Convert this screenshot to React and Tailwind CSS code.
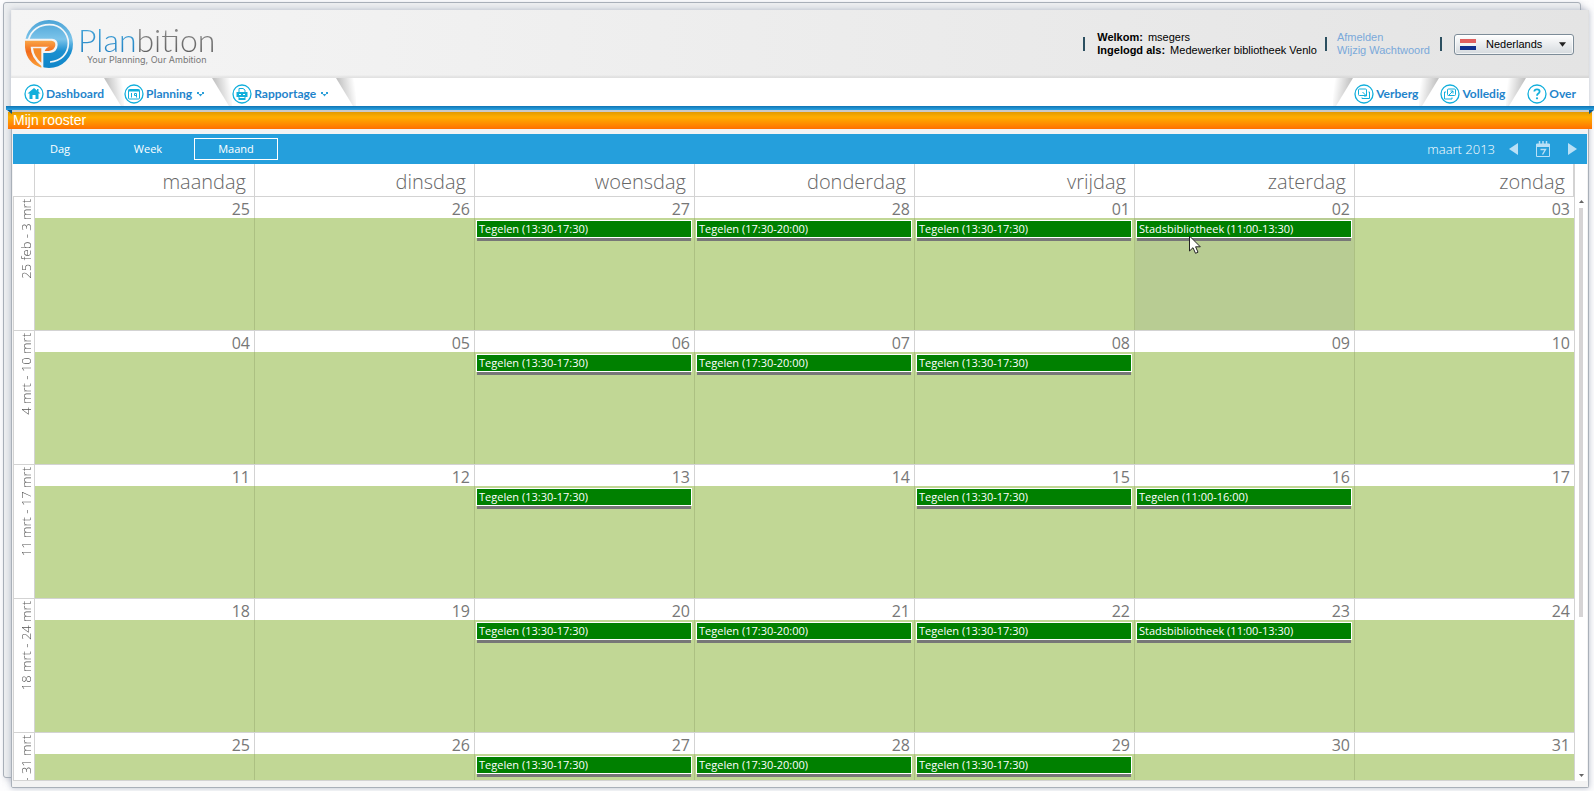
import React from "react";

const DAYS = [
  "maandag",
  "dinsdag",
  "woensdag",
  "donderdag",
  "vrijdag",
  "zaterdag",
  "zondag",
];

const MORNING = "Tegelen (13:30-17:30)";
const EVENING = "Tegelen (17:30-20:00)";
const LIBRARY = "Stadsbibliotheek (11:00-13:30)";

const WEEKS = [
  {
    label: "25 feb - 3 mrt",
    days: ["25", "26", "27", "28", "01", "02", "03"],
    events: { 2: MORNING, 3: EVENING, 4: MORNING, 5: LIBRARY },
    active: 5,
  },
  {
    label: "4 mrt - 10 mrt",
    days: ["04", "05", "06", "07", "08", "09", "10"],
    events: { 2: MORNING, 3: EVENING, 4: MORNING },
  },
  {
    label: "11 mrt - 17 mrt",
    days: ["11", "12", "13", "14", "15", "16", "17"],
    events: { 2: MORNING, 4: MORNING, 5: "Tegelen (11:00-16:00)" },
  },
  {
    label: "18 mrt - 24 mrt",
    days: ["18", "19", "20", "21", "22", "23", "24"],
    events: { 2: MORNING, 3: EVENING, 4: MORNING, 5: LIBRARY },
  },
  {
    label: "25 mrt - 31 mrt",
    days: ["25", "26", "27", "28", "29", "30", "31"],
    events: { 2: MORNING, 3: EVENING, 4: MORNING },
  },
];

function Logo() {
  return (
    <div className="flex items-center gap-1">
      <svg className="size-[50px]" viewBox="14 7 150 150" aria-hidden="true">
        <defs>
          <linearGradient id="logoBlue" x1="0" y1="0" x2="0" y2="1">
            <stop offset="0" stopColor="#4ba3d6" />
            <stop offset="0.4" stopColor="#7cc4ea" />
            <stop offset="0.65" stopColor="#1b8fd0" />
            <stop offset="1" stopColor="#0f86c9" />
          </linearGradient>
          <linearGradient id="logoOrange" x1="0" y1="0" x2="0" y2="1">
            <stop offset="0" stopColor="#f9a648" />
            <stop offset="0.4" stopColor="#f26a1b" />
            <stop offset="1" stopColor="#fba23a" />
          </linearGradient>
        </defs>
        <circle cx="89" cy="82" r="72" fill="url(#logoBlue)" />
        <path
          d="M28 68 C36 40 60 24 90 24 C124 24 147 50 147 80 C147 112 124 134 92 136"
          fill="none"
          stroke="#f3f6f8"
          strokeWidth="5"
        />
        <path
          d="M12 66 H98 Q115 67 115 84 Q114 106 92 109 H72 V158 Q22 146 12 90 Z"
          fill="#f4f4f4"
        />
        <path
          d="M17 72 H96 Q109 73 108 86 Q106 101 88 103 L76 103 Q80 92 90 90 H34 Q34 122 66 148 V153 Q22 140 17 92 Z"
          fill="url(#logoOrange)"
        />
        <path
          d="M41 95 H66 V138 Q45 122 41 95 Z"
          fill="#f58a2c"
        />
      </svg>
      <div className="flex flex-col items-center">
        <span className="font-['Lato',sans-serif] text-[32px] leading-[30px] font-light">
          <span className="bg-linear-to-b from-[#4fb0e0] to-[#1779bd] bg-clip-text text-transparent">
            Plan
          </span>
          <span className="bg-linear-to-b from-[#9a9a9a] to-[#555] bg-clip-text text-transparent">
            bition
          </span>
        </span>
        <span className="font-['Inter',sans-serif] text-[9px] leading-[9px] text-[#777]">
          Your Planning, Our Ambition
        </span>
      </div>
    </div>
  );
}

function Divider() {
  return <span className="h-[14px] w-[2px] bg-[#2b4f60]" />;
}

function Header() {
  return (
    <header className="flex h-[68px] shrink-0 items-center justify-between bg-linear-to-r from-[#f5f5f5] to-[#e4e4e4] pr-[15px] pl-[13px] shadow-[inset_0_-2px_2px_#00000010]">
      <Logo />
      <div className="flex items-center text-[11px] leading-[13px] text-black">
        <Divider />
        <div className="mr-2 ml-3">
          <p>
            <b className="mr-[5px]">Welkom:</b>msegers
          </p>
          <p>
            <b className="mr-[5px]">Ingelogd als:</b>Medewerker bibliotheek
            Venlo
          </p>
        </div>
        <Divider />
        <div className="mr-[10px] ml-[10px] flex flex-col text-[#7aa9da]">
          <a href="#afmelden">Afmelden</a>
          <a href="#wachtwoord">Wijzig Wachtwoord</a>
        </div>
        <Divider />
        <div className="relative ml-3">
          <select
            aria-label="Taal"
            className="block h-[21px] w-[120px] appearance-none rounded-[3px] border border-[#7d8c98] bg-linear-to-b from-white to-[#d5dade] pl-[31px] text-[11px] shadow-[inset_0_0_0_1px_#ffffffb0]"
          >
            <option>Nederlands</option>
          </select>
          <svg
            className="pointer-events-none absolute top-[5px] left-[6px] h-[11px] w-4"
            viewBox="0 0 16 11"
          >
            <rect width="16" height="11" fill="#f4f4f4" />
            <rect width="16" height="4" fill="#e0605f" />
            <rect y="7" width="16" height="4" fill="#10308f" />
          </svg>
          <svg
            className="pointer-events-none absolute top-2 right-2 h-[5px] w-[7px]"
            viewBox="0 0 8 5"
          >
            <path d="M0 0H8L4 5Z" fill="#222" />
          </svg>
        </div>
      </div>
    </header>
  );
}

function CircleIcon({ children }) {
  return (
    <svg
      className="size-5 shrink-0"
      viewBox="0 0 20 20"
      fill="none"
      stroke="#12afdc"
      aria-hidden="true"
    >
      <circle cx="10" cy="10" r="9" strokeWidth="1.3" fill="#fff" />
      {children}
    </svg>
  );
}

function NavLink({ href, icon, menu, children }) {
  return (
    <a
      href={href}
      className="flex items-center gap-[2px] pt-1 font-['Lato',sans-serif] text-[12px] leading-[20px] font-bold text-[#1f84cb]"
    >
      <CircleIcon>{icon}</CircleIcon>
      {children}
      {menu && (
        <svg
          className="mt-[2px] ml-[3px] h-[6px] w-[7px]"
          viewBox="0 0 7 6"
          fill="#2c9fd8"
          aria-hidden="true"
        >
          <path d="M0 0H2V2H0ZM5 0H7V2H5ZM1.500 2H5.500L3.500 4.500Z" />
        </svg>
      )}
    </a>
  );
}

// Shaded fold between two tabs
function Slant({ flip }) {
  return (
    <svg
      className={
        flip
          ? "mr-px ml-px h-7 w-[20px] shrink-0 -scale-x-100"
          : "h-7 w-[20px] shrink-0"
      }
      viewBox="0 0 20 28"
      aria-hidden="true"
    >
      <defs>
        <linearGradient id="fold" x1="0" y1="0.2" x2="1" y2="0">
          <stop offset="0.1" stopColor="#c2c2c2" />
          <stop offset="0.9" stopColor="#ffffff" />
        </linearGradient>
      </defs>
      <path d="M0 0H20V28H17Z" fill="url(#fold)" />
    </svg>
  );
}

function Nav() {
  return (
    <nav className="flex h-7 shrink-0 items-center justify-between bg-white pr-[13px] pl-[13px]">
      <div className="flex items-center">
        <NavLink
          href="#dashboard"
          icon={
            <path
              d="M10 4 L3.500 9.500 H5.500 V15 H8.500 V11 H11.500 V15 H14.500 V9.500 H16.500 L14.500 7.800 V5 H13 V6.500 Z"
              fill="#12afdc"
              stroke="none"
            />
          }
        >
          Dashboard
        </NavLink>
        <Slant />
        <NavLink
          href="#planning"
          menu
          icon={
            <>
              <rect x="4.500" y="5.500" width="11" height="9.500" rx="1" />
              <path d="M4.500 6.500H15.500" strokeWidth="2" />
              <path d="M7.500 9V13.500M12.500 13.500V9.500H10.500V11.500H12.500" />
            </>
          }
        >
          Planning
        </NavLink>
        <span className="w-2" />
        <Slant />
        <NavLink
          href="#rapportage"
          menu
          icon={
            <>
              <path
                d="M4.500 8H15.500V13H13.500V16H6.500V13H4.500Z"
                fill="#12afdc"
                stroke="none"
              />
              <path d="M7 8V4.500H11L13 6V8" />
              <path d="M7 10.500H9M11 10.500H13M7.500 13.500H12.500" stroke="#fff" />
            </>
          }
        >
          Rapportage
        </NavLink>
        <span className="w-2" />
        <Slant />
      </div>
      <div className="flex items-center">
        <Slant flip />
        <NavLink
          href="#verberg"
          icon={
            <>
              <rect x="4.500" y="5" width="8" height="6.500" rx="1" />
              <path d="M8 13.500V14.500H15.500V8H14.500" />
              <path d="M8.500 8L12.500 12M12.500 9.500V12H10" />
            </>
          }
        >
          Verberg
        </NavLink>
        <Slant flip />
        <NavLink
          href="#volledig"
          icon={
            <>
              <rect x="7.500" y="5" width="8" height="6.500" rx="1" />
              <path d="M6 8H4.500V15H12V13.500" />
              <path d="M8.500 11.500L13 7M10.500 7H13V9.500" />
            </>
          }
        >
          Volledig
        </NavLink>
        <Slant flip />
        <NavLink
          href="#over"
          icon={
            <>
              <path
                d="M7.300 7.500Q7.500 5.300 10 5.300Q12.600 5.300 12.600 7.500Q12.600 8.800 11.300 9.600Q10 10.400 10 11.800"
                strokeWidth="1.8"
              />
              <circle cx="10" cy="14.300" r="1.100" fill="#12afdc" stroke="none" />
            </>
          }
        >
          Over
        </NavLink>
      </div>
    </nav>
  );
}

// Blue ribbon, sticks out past both sides of the panel, with the folded ends under it
function Ribbon() {
  return (
    <div className="relative -mr-[5px] -ml-[5px] h-[6px] shrink-0">
      <div className="h-1 bg-linear-to-b from-[#0e74b4] to-[#2ba4e2]" />
      <div className="mx-[5px] h-[2px] bg-[#c9c9c9]" />
      <svg
        className="absolute top-1 left-[1px] z-10 h-1 w-[5px]"
        viewBox="0 0 5 4"
      >
        <path d="M0 0H5V4Z" fill="#0c5a8c" />
      </svg>
      <svg
        className="absolute top-1 right-0 z-10 h-1 w-[5px]"
        viewBox="0 0 5 4"
      >
        <path d="M0 0H5L0 4Z" fill="#0c5a8c" />
      </svg>
    </div>
  );
}

function ViewButton({ active, children }) {
  return (
    <button
      type="button"
      aria-pressed={active}
      className={
        active
          ? "h-[22px] w-[84px] border border-white text-center"
          : "h-[22px] w-[84px] border border-transparent text-center"
      }
    >
      {children}
    </button>
  );
}

function Toolbar() {
  return (
    <div className="flex h-[30px] shrink-0 items-center justify-between bg-[#259fdc] pr-[10px] pl-[5px] font-['Open_Sans',sans-serif] text-white">
      <div className="flex gap-1 text-[11px] leading-[16px]">
        <ViewButton>Dag</ViewButton>
        <ViewButton>Week</ViewButton>
        <ViewButton active>Maand</ViewButton>
      </div>
      <div className="flex items-center">
        <span className="mr-[14px] text-[13px] leading-[18px] font-light">
          maart 2013
        </span>
        <button type="button" aria-label="Vorige maand" className="mr-[18px]">
          <svg className="h-3 w-[9px]" viewBox="0 0 9 12" fill="#b9e0f6">
            <path d="M9 0V12L0 6Z" />
          </svg>
        </button>
        <button type="button" aria-label="Vandaag" className="mr-[18px]">
          <svg
            className="h-4 w-[14px]"
            viewBox="0 0 14 16"
            fill="none"
            stroke="#b9e0f6"
          >
            <path d="M0.500 3V15.500H13.500V3Z" />
            <path d="M1 4.500H13" strokeWidth="3" />
            <path d="M3.500 0V3M7 0V3M10.500 0V3" strokeWidth="1.500" />
            <path d="M4.500 8.500H9.500L6.500 13.500" strokeWidth="1.400" />
          </svg>
        </button>
        <button type="button" aria-label="Volgende maand">
          <svg className="h-3 w-[9px]" viewBox="0 0 9 12" fill="#b9e0f6">
            <path d="M0 0V12L9 6Z" />
          </svg>
        </button>
      </div>
    </div>
  );
}

function Pointer() {
  return (
    <svg
      className="pointer-events-none absolute top-[17px] left-[54px] h-[19px] w-3"
      viewBox="0 0 12 19"
    >
      <path
        d="M0.500 1V16L4 12.700L6.500 18.300L9 17.200L6.600 11.800H11.300Z"
        fill="#fff"
        stroke="#222"
      />
    </svg>
  );
}

function DayCell({ number, event, active, last }) {
  return (
    <td className="border-b border-[#d3d3d3] p-0 align-top">
      <div className="h-[21px] border-r border-[#d3d3d3] bg-white pr-1 text-right text-[16px] leading-[24px] text-[#777]">
        {number}
      </div>
      <div
        className={`relative h-[112px] border-r pt-[2px] pr-[2px] pl-px ${
          last ? "border-[#d3d3d3]" : "border-[#acc082]"
        } ${active ? "bg-[#b8cc93]" : "bg-[#c1d795]"}`}
      >
        {event && (
          <>
            <div className="h-[18px] truncate border border-white bg-[#008000] px-[2px] text-[11px] leading-[16px] text-white">
              {event}
            </div>
            <div className="mx-px h-[3px] bg-[#777]" />
          </>
        )}
        {active && <Pointer />}
      </div>
    </td>
  );
}

function MonthTable() {
  return (
    <table className="w-full table-fixed border-separate border-spacing-0 font-['Open_Sans',sans-serif]">
      <thead>
        <tr>
          <th className="h-[33px] w-[22px] border-r border-b border-[#d3d3d3] p-0" />
          {DAYS.map((day) => (
            <th
              key={day}
              scope="col"
              className="h-[33px] border-r border-b border-[#d3d3d3] pt-1 pr-2 pb-0 pl-0 text-right text-[20px] leading-[28px] font-light text-[#666] last:border-r-2"
            >
              {day}
            </th>
          ))}
        </tr>
      </thead>
      <tbody>
        {WEEKS.map((week) => (
          <tr key={week.label}>
            <th
              scope="row"
              className="border-x border-b border-[#d3d3d3] p-0 pt-[2px] text-right align-top"
            >
              <span className="inline-block rotate-180 text-[13px] leading-[16px] font-light whitespace-nowrap text-[#555] [writing-mode:vertical-rl]">
                {week.label}
              </span>
            </th>
            {week.days.map((number, i) => (
              <DayCell
                key={number}
                number={number}
                event={week.events[i]}
                active={week.active === i}
                last={i === 6}
              />
            ))}
          </tr>
        ))}
      </tbody>
    </table>
  );
}

function ScrollTrack() {
  return (
    <div className="flex w-3 shrink-0 flex-col items-center pt-9 pb-1">
      <svg className="h-[3px] w-[5px]" viewBox="0 0 5 3">
        <path d="M2.500 0L5 3H0Z" fill="#666" />
      </svg>
      <div className="mt-[5px] w-1 grow-[408] bg-[#d6d4d5]" />
      <div className="grow-[157]" />
      <svg className="h-[3px] w-[5px]" viewBox="0 0 5 3">
        <path d="M0 0H5L2.500 3Z" fill="#666" />
      </svg>
    </div>
  );
}

export default function App() {
  return (
    <div className="relative flex h-screen flex-col bg-[#fdfdfe] pt-[10px] pr-[5px] pb-[3px] pl-[11px] font-['Liberation_Sans',Arial,sans-serif]">
      <div className="absolute top-[2px] right-[13px] bottom-[13px] left-[3px] rounded-[3px] border border-[#a9b0b9] bg-[#eceef0] shadow-[2px_2px_6px_#8b94a866]" />
      <div className="relative flex min-h-0 grow flex-col shadow-[0_0_6px_#8b94a899]">
        <Header />
        <Nav />
        <Ribbon />
        <div className="flex min-h-0 grow flex-col rounded-b-[2px] border-x border-b border-[#a9b0b9] bg-[#f3f3f3] px-px pb-[6px]">
          <h1 className="-mx-[5px] mb-[5px] h-[17px] shrink-0 bg-linear-to-b from-[#e39a00] via-[#ffae00] via-30% to-[#ff7000] pl-[5px] text-[14px] leading-[17px] text-white">
            Mijn rooster
          </h1>
          <Toolbar />
          <div className="flex min-h-0 grow bg-white">
            <div className="min-w-0 grow overflow-hidden border-b border-[#d3d3d3]">
              <MonthTable />
            </div>
            <ScrollTrack />
          </div>
        </div>
      </div>
    </div>
  );
}
